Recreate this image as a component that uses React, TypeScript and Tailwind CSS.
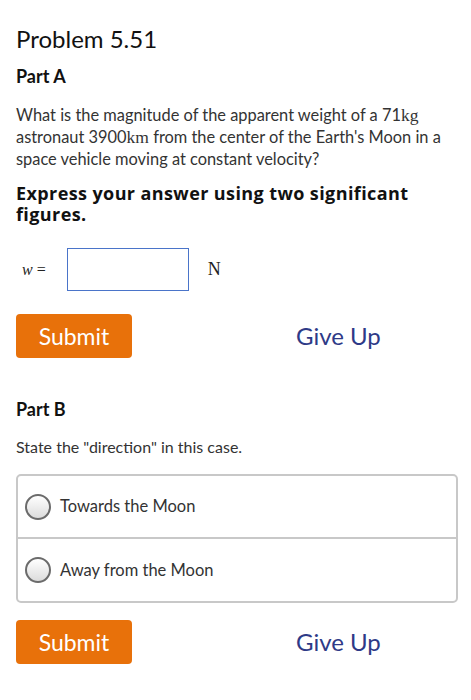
import React from 'react'

const font = { fontFamily: 'Lato, "Open Sans", sans-serif' }
const serif = { fontFamily: '"Liberation Serif", serif' }

function Radio() {
  return (
    <span className="inline-block w-[26px] h-[26px] rounded-full border-2 border-[#6b6b6b] bg-gradient-to-b from-white to-[#dcdcdc] shrink-0" />
  )
}

function Actions() {
  return (
    <div className="flex items-center">
      <button className="w-[116px] h-[44px] rounded-[4px] bg-[#e8710a] text-white text-[23px] leading-none">
        Submit
      </button>
      <span className="ml-[164px] text-[24px] text-[#2e3a87]">Give Up</span>
    </div>
  )
}

export default function App() {
  return (
    <div className="w-[471px] h-[700px] bg-white text-[#333] px-4" style={font}>
      <h1 className="pt-[23px] text-[24px] leading-[32px] text-[#111]">Problem 5.51</h1>
      <h2 className="mt-[9px] text-[18px] leading-[24px] font-bold text-[#111]">Part A</h2>
      <p className="mt-[16px] text-[16.4px] leading-[22px]">
        What is the magnitude of the apparent weight of a 71<span style={serif} className="inline-block text-[17.5px] leading-[16px]">kg</span>{' '}
        astronaut 3900<span style={serif} className="inline-block text-[17.5px] leading-[16px]">km</span> from the center of the Earth's Moon in a space vehicle moving at constant velocity?
      </p>
      <p
        className="mt-[13px] text-[18px] leading-[21px] font-bold tracking-[0.4px] text-[#111]"
        style={{ fontFamily: '"Open Sans", Lato, sans-serif' }}
      >
        Express your answer using two significant figures.
      </p>
      <div className="mt-[23px] flex items-center">
        <span className="ml-[6px] text-[16px] text-[#222]" style={serif}>
          <i>w</i> =
        </span>
        <div className="ml-[21px] w-[122px] h-[43px] border border-[#4a74c9]" />
        <span className="ml-[19px] text-[18px] text-[#222]" style={serif}>N</span>
      </div>
      <div className="mt-[23px]">
        <Actions />
      </div>
      <h2 className="mt-[39px] text-[18px] leading-[24px] font-bold text-[#111]">Part B</h2>
      <p className="mt-[15px] text-[16px] leading-[22px]">State the "direction" in this case.</p>
      <div className="mt-[16px] w-[442px] border-2 border-[#c8c8c8] rounded-[5px]">
        <div className="h-[63px] flex items-center pl-[7px] gap-[9px] border-b-2 border-[#c8c8c8]">
          <Radio />
          <span className="text-[16.5px]">Towards the Moon</span>
        </div>
        <div className="h-[62px] flex items-center pl-[7px] gap-[9px]">
          <Radio />
          <span className="text-[16.5px]">Away from the Moon</span>
        </div>
      </div>
      <div className="mt-[17px]">
        <Actions />
      </div>
    </div>
  )
}
